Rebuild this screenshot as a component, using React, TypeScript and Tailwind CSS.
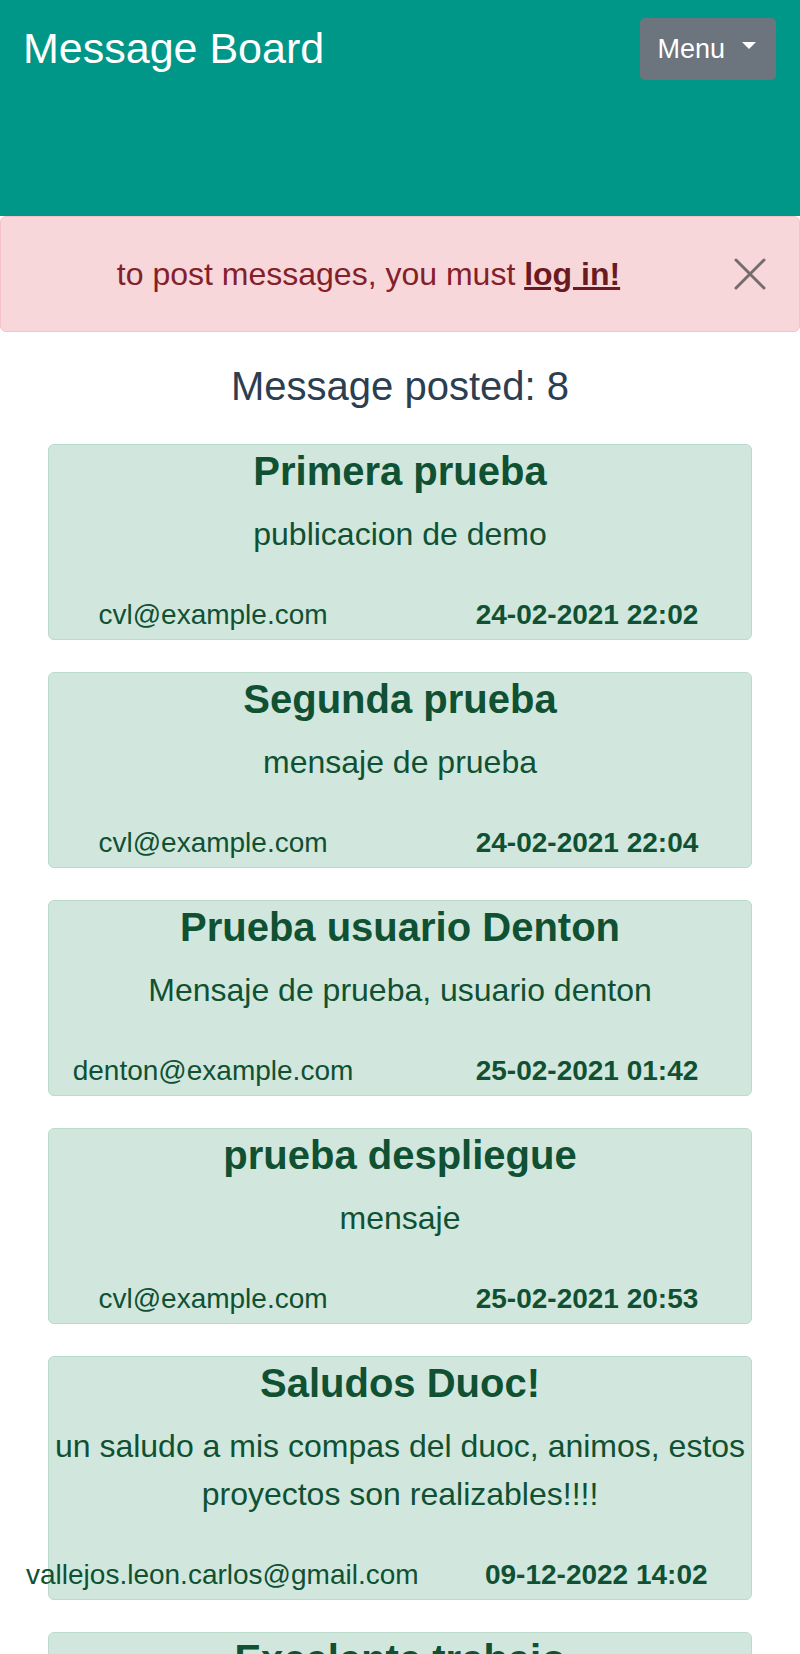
import React from "react";

const messages = [
  {
    title: "Primera prueba",
    body: "publicacion de demo",
    email: "cvl@example.com",
    date: "24-02-2021 22:02",
  },
  {
    title: "Segunda prueba",
    body: "mensaje de prueba",
    email: "cvl@example.com",
    date: "24-02-2021 22:04",
  },
  {
    title: "Prueba usuario Denton",
    body: "Mensaje de prueba, usuario denton",
    email: "denton@example.com",
    date: "25-02-2021 01:42",
  },
  {
    title: "prueba despliegue",
    body: "mensaje",
    email: "cvl@example.com",
    date: "25-02-2021 20:53",
  },
  {
    title: "Saludos Duoc!",
    body: "un saludo a mis compas del duoc, animos, estos proyectos son realizables!!!!",
    email: "vallejos.leon.carlos@gmail.com",
    date: "09-12-2022 14:02",
  },
  {
    title: "Excelente trabajo",
    body: "muy buen trabajo",
    email: "cvl@example.com",
    date: "10-12-2022 10:15",
  },
];

export default function App() {
  return (
    <div className="min-h-screen bg-white font-['Liberation_Sans',Arial,sans-serif]">
      <Header />
      <LoginAlert />
      <main>
        <h2 className="mt-[30px] mb-[34px] text-center text-[40px] leading-[48px] text-[#2c3e50]">
          Message posted: 8
        </h2>
        <div className="flex flex-col gap-[32px] px-[48px] pb-10">
          {messages.map((m, i) => (
            <MessageCard key={i} {...m} />
          ))}
        </div>
      </main>
    </div>
  );
}

function Header() {
  return (
    <header className="flex h-[216px] items-start justify-between bg-[#009688] pt-[18px] pl-[23px] pr-[24px]">
      <div className="mt-[5px] text-[43px] leading-[50px] text-white">Message Board</div>
      <button className="flex h-[62px] items-center rounded-[5px] bg-[#6c757d] pl-[17px] pr-[20px] text-[27px] text-white">
        <span>Menu</span>
        <span className="ml-[17px] mt-[-8px] h-0 w-0 border-t-[7px] border-r-[7px] border-l-[7px] border-t-white border-r-transparent border-l-transparent" />
      </button>
    </header>
  );
}

function LoginAlert() {
  return (
    <div className="flex h-[116px] items-center rounded-[6px] border border-[#f5c2c7] bg-[#f8d7da] pl-5 pr-[33px]">
      <p className="flex-1 text-center text-[32px] text-[#842029]">
        to post messages, you must{" "}
        <a href="#" className="font-bold text-[#6a1a21] underline">
          log in!
        </a>
      </p>
      <button className="ml-[18px] h-[32px] w-[32px]" aria-label="Close">
        <svg viewBox="0 0 32 32" className="h-[32px] w-[32px]">
          <path
            d="M2 2 L30 30 M30 2 L2 30"
            stroke="#756c6d"
            strokeWidth="3"
            strokeLinecap="round"
            fill="none"
          />
        </svg>
      </button>
    </div>
  );
}

function MessageCard({ title, body, email, date }: any) {
  return (
    <div className="rounded-[6px] border border-[#badbcc] bg-[#d1e7dd] pt-[2px] pb-[3px] text-center text-[#0f5132]">
      <h3 className="text-[40px] font-bold leading-[48px]">{title}</h3>
      <p className="mt-[15px] text-[32px] leading-[48px]">{body}</p>
      <div className="mt-[36px] -mx-[23px] flex text-[28px] leading-[42px]">
        <div className="flex-1 whitespace-nowrap">{email}</div>
        <div className="flex-1 font-bold">{date}</div>
      </div>
    </div>
  );
}
